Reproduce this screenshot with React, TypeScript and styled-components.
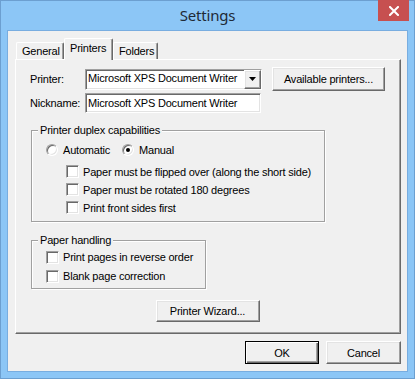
import React from "react";
import styled, { createGlobalStyle, css } from "styled-components";

const GlobalStyle = createGlobalStyle`
  html, body {
    margin: 0;
    padding: 0;
    background: #8cc6f6;
  }
  * {
    box-sizing: border-box;
  }
`;

// --- bevels (classic 3D look) ---
const raised = css`
  border-top: 1px solid #ffffff;
  border-left: 1px solid #ffffff;
  border-right: 1px solid #696969;
  border-bottom: 1px solid #696969;
  box-shadow: inset -1px -1px 0 #a0a0a0, inset 1px 1px 0 #e3e3e3;
`;

const sunken = css`
  border-top: 1px solid #a0a0a0;
  border-left: 1px solid #a0a0a0;
  border-right: 1px solid #ffffff;
  border-bottom: 1px solid #ffffff;
  box-shadow: inset 1px 1px 0 #696969, inset -1px -1px 0 #e3e3e3;
`;

const uiFont = css`
  font-family: "Liberation Sans", Arial, sans-serif;
  font-size: 11px;
  letter-spacing: -0.2px;
  color: #000;
`;

// --- window frame ---
const Window = styled.div`
  width: 415px;
  height: 379px;
  background: #8cc6f6;
  border: 1px solid #6c9fd0;
  padding: 0 6px 6px 6px;
  display: flex;
  flex-direction: column;
  ${uiFont}
`;

const TitleBar = styled.div`
  height: 29px;
  display: grid;
  grid-template-columns: 1fr auto 1fr;
  align-items: start;
`;

const Title = styled.div`
  grid-column: 2;
  font-family: "Noto Sans", "Open Sans", sans-serif;
  font-size: 15px;
  letter-spacing: -0.2px;
  line-height: 28px;
  color: #1f2a36;
`;

const CloseButton = styled.div`
  grid-column: 3;
  justify-self: end;
  width: 31px;
  height: 21px;
  margin-top: -1px;
  margin-right: -1px;
  background: #c75050;
  display: flex;
  align-items: center;
  justify-content: center;
`;

const Client = styled.div`
  flex: 1;
  background: #f0f0f0;
  border: 1px solid #78ade0;
  display: flex;
  flex-direction: column;
  padding-top: 7px;
`;

// --- tabs ---
const TabRow = styled.div`
  display: flex;
  align-items: flex-end;
  height: 21px;
  margin-left: 8px;
  position: relative;
  z-index: 1;
`;

const Tab = styled.div<{ $active?: boolean; $w: number }>`
  width: ${(p) => p.$w}px;
  height: ${(p) => (p.$active ? 22 : 17)}px;
  margin-bottom: ${(p) => (p.$active ? -1 : 0)}px;
  padding-top: ${(p) => (p.$active ? 3 : 2)}px;
  padding-left: 5px;
  background: #f0f0f0;
  border-top: 1px solid #ffffff;
  border-left: 1px solid #ffffff;
  border-right: 1px solid #696969;
  box-shadow: inset -1px 0 0 #a0a0a0;
  border-radius: 2px 2px 0 0;
  white-space: nowrap;
`;

const Panel = styled.div`
  width: 386px;
  height: 275px;
  margin-left: 7px;
  ${raised}
  box-shadow: inset -1px -1px 0 #a0a0a0;
  padding: 7px 15px 0 14px;
  display: flex;
  flex-direction: column;
`;

// --- form rows ---
const FieldRow = styled.div<{ $h: number; $mt?: number }>`
  display: flex;
  align-items: center;
  height: ${(p) => p.$h}px;
  margin-top: ${(p) => p.$mt ?? 0}px;
`;

const FieldLabel = styled.div`
  width: 55px;
`;

const Combo = styled.div`
  width: 177px;
  height: 21px;
  background: #ffffff;
  ${sunken}
  display: flex;
  align-items: stretch;
`;

const ComboText = styled.div`
  flex: 1;
  padding-left: 2px;
  line-height: 17px;
  white-space: nowrap;
  overflow: hidden;
`;

const ComboArrow = styled.div`
  width: 17px;
  background: #f0f0f0;
  ${raised}
  display: flex;
  align-items: center;
  justify-content: center;
`;

const TextBox = styled.input`
  width: 176px;
  height: 20px;
  background: #ffffff;
  ${sunken}
  ${uiFont}
  padding: 0 0 0 2px;
  margin: 0;
  outline: none;
`;

const PushButton = styled.button<{ $w: number; $h: number; $default?: boolean }>`
  width: ${(p) => p.$w}px;
  height: ${(p) => p.$h}px;
  padding: 0;
  margin: 0;
  background: #f0f0f0;
  ${uiFont}
  ${raised}
  ${(p) =>
    p.$default &&
    css`
      border: 1px solid #000;
      box-shadow: inset 1px 1px 0 #fff, inset -1px -1px 0 #696969,
        inset -2px -2px 0 #a0a0a0;
    `}
  cursor: default;
`;

// --- group boxes ---
const Group = styled.fieldset<{ $w: number; $mt: number; $pt: number; $pb: number }>`
  width: ${(p) => p.$w}px;
  margin: ${(p) => p.$mt}px 0 0 1px;
  padding: ${(p) => p.$pt}px 0 ${(p) => p.$pb}px 14px;
  border: 1px solid #a0a0a0;
  box-shadow: inset 1px 1px 0 #ffffff, 1px 1px 0 #ffffff;
  min-inline-size: 0;
`;

/* legend sits inside the fieldset padding, so pull it back to the border */
const Legend = styled.legend`
  margin-left: -8px;
  padding: 0 2px;
  line-height: 13px;
  background: #f0f0f0;
`;

const RadioRow = styled.div`
  display: flex;
  align-items: center;
  height: 17px;
`;

const RadioItem = styled.div<{ $w?: number }>`
  display: flex;
  align-items: center;
  gap: 5px;
  width: ${(p) => (p.$w ? `${p.$w}px` : "auto")};
`;

const RadioCircle = styled.span<{ $checked?: boolean }>`
  width: 12px;
  height: 12px;
  border-radius: 50%;
  background: #ffffff;
  border: 1px solid;
  border-color: #a0a0a0 #ffffff #ffffff #a0a0a0;
  box-shadow: inset 1px 1px 0 #696969, inset -1px -1px 0 #e3e3e3;
  display: flex;
  align-items: center;
  justify-content: center;
  &::after {
    content: "";
    width: 4px;
    height: 4px;
    border-radius: 50%;
    background: ${(p) => (p.$checked ? "#000" : "transparent")};
  }
`;

const CheckList = styled.div<{ $indent: number; $mt: number; $rowH: number }>`
  display: flex;
  flex-direction: column;
  gap: 1px;
  margin-top: ${(p) => p.$mt}px;
  padding-left: ${(p) => p.$indent}px;
  & > div {
    height: ${(p) => p.$rowH}px;
  }
`;

const CheckRow = styled.div`
  display: flex;
  align-items: center;
  gap: 4px;
  white-space: nowrap;
`;

const CheckBox = styled.span`
  width: 13px;
  height: 13px;
  background: #ffffff;
  ${sunken}
  flex-shrink: 0;
`;

const Footer = styled.div`
  display: flex;
  justify-content: flex-end;
  gap: 7px;
  margin-top: 7px;
  padding-right: 6px;
`;

function Check({ label }: { label: string }) {
  return (
    <CheckRow>
      <CheckBox />
      <span>{label}</span>
    </CheckRow>
  );
}

export default function App() {
  return (
    <>
      <GlobalStyle />
      <Window>
        <TitleBar>
          <Title>Settings</Title>
          <CloseButton>
            <svg width="10" height="10" viewBox="0 0 10 10">
              <path
                d="M1 1 L9 9 M9 1 L1 9"
                stroke="#ffffff"
                strokeWidth="2"
                strokeLinecap="square"
              />
            </svg>
          </CloseButton>
        </TitleBar>
        <Client>
          <TabRow>
            <Tab $w={48}>General</Tab>
            <Tab $w={49} $active>
              Printers
            </Tab>
            <Tab $w={45}>Folders</Tab>
          </TabRow>
          <Panel>
            <FieldRow $h={24}>
              <FieldLabel>Printer:</FieldLabel>
              <Combo>
                <ComboText>Microsoft XPS Document Writer</ComboText>
                <ComboArrow>
                  <svg width="7" height="4" viewBox="0 0 7 4">
                    <path d="M0 0 H7 L3.5 4 Z" fill="#000" />
                  </svg>
                </ComboArrow>
              </Combo>
              <PushButton $w={113} $h={24} style={{ marginLeft: 10 }}>
                Available printers...
              </PushButton>
            </FieldRow>
            <FieldRow $h={20} $mt={2}>
              <FieldLabel>Nickname:</FieldLabel>
              <TextBox readOnly defaultValue="Microsoft XPS Document Writer" />
            </FieldRow>

            <Group $w={294} $mt={11} $pt={4} $pb={5}>
              <Legend>Printer duplex capabilities</Legend>
              <RadioRow>
                <RadioItem $w={76}>
                  <RadioCircle />
                  <span>Automatic</span>
                </RadioItem>
                <RadioItem>
                  <RadioCircle $checked />
                  <span>Manual</span>
                </RadioItem>
              </RadioRow>
              <CheckList $indent={20} $mt={5} $rowH={17}>
                <Check label="Paper must be flipped over (along the short side)" />
                <Check label="Paper must be rotated 180 degrees" />
                <Check label="Print front sides first" />
              </CheckList>
            </Group>

            <Group $w={175} $mt={12} $pt={1} $pb={3}>
              <Legend>Paper handling</Legend>
              <CheckList $indent={0} $mt={0} $rowH={18}>
                <Check label="Print pages in reverse order" />
                <Check label="Blank page correction" />
              </CheckList>
            </Group>

            <PushButton $w={104} $h={22} style={{ marginTop: 11, alignSelf: "center" }}>
              Printer Wizard...
            </PushButton>
          </Panel>
          <Footer>
            <PushButton $w={74} $h={23} $default>
              OK
            </PushButton>
            <PushButton $w={75} $h={23}>
              Cancel
            </PushButton>
          </Footer>
        </Client>
      </Window>
    </>
  );
}
